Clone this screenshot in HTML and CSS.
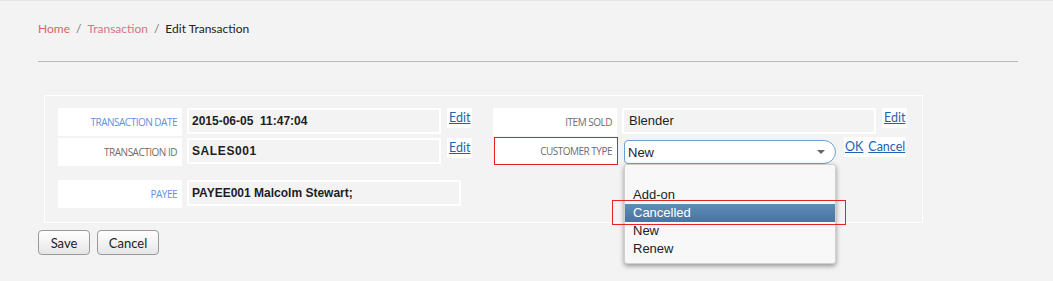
FILE: index.html
```html
<!DOCTYPE html>
<html>
<head>
<meta charset="utf-8">
<link rel="stylesheet" href="styles.css">
</head>
<body>
<div class="page">
  <div class="crumbs">
    <a class="c-home">Home</a><span class="sep">/</span><a class="c-trans">Transaction</a><span class="sep">/</span><span class="c-cur">Edit Transaction</span>
  </div>
  <div class="rule"></div>
  <div class="panel">
    <div class="col col-left">
      <div class="row">
        <div class="label blue">TRANSACTION DATE</div>
        <div class="value bold">2015-06-05&nbsp;&nbsp;11:47:04</div>
        <div class="links"><a>Edit</a></div>
      </div>
      <div class="row r2">
        <div class="label">TRANSACTION ID</div>
        <div class="value bold spaced">SALES001</div>
        <div class="links"><a>Edit</a></div>
      </div>
      <div class="row r3">
        <div class="label blue">PAYEE</div>
        <div class="value bold wide">PAYEE001 Malcolm Stewart;</div>
      </div>
    </div>
    <div class="col col-right">
      <div class="row">
        <div class="label">ITEM SOLD</div>
        <div class="value reg">Blender</div>
        <div class="links"><a>Edit</a></div>
      </div>
      <div class="row r2b">
        <div class="label red">CUSTOMER TYPE</div>
        <div class="select-wrap">
          <div class="select"><span>New</span><span class="arrow"></span></div>
          <ul class="dropdown">
            <li class="empty">&nbsp;</li>
            <li>Add-on</li>
            <li class="sel">Cancelled</li>
            <li>New</li>
            <li>Renew</li>
          </ul>
          <div class="mark"></div>
        </div>
        <div class="links ok"><a>OK</a><a>Cancel</a></div>
      </div>
    </div>
  </div>
  <div class="actions">
    <button class="btn save">Save</button>
    <button class="btn cancel">Cancel</button>
  </div>
</div>
</body>
</html>
```
FILE: styles.css
```css
html, body {
  margin: 0;
  padding: 0;
  background: #f3f3f3;
}
html { height: 100%; }
body {
  min-height: 100%;
  box-sizing: border-box;
  border-top: 1px solid #e6e6e6;
  font-family: Lato, "Open Sans", sans-serif;
}
.page {
  padding: 0 35px 0 38px;
}
.crumbs {
  padding-top: 18px;
  font-size: 12px;
  line-height: 20px;
  color: #222;
}
.crumbs .sep {
  color: #777;
  margin: 0 6px;
}
.c-home { color: #dd6467; }
.c-trans { color: #e07087; }
.rule {
  margin-top: 22px;
  width: 980px;
  border-top: 1px solid #bbbbbb;
}
.panel {
  margin: 33px 0 0 6px;
  width: 879px;
  height: 128px;
  box-sizing: border-box;
  border: 1px solid #ffffff;
  padding: 12px 0 0 13px;
  display: flex;
  position: relative;
  z-index: 1;
}
.col {
  display: flex;
  flex-direction: column;
}
.col-left { width: 435px; }
.row {
  display: flex;
  align-items: flex-start;
  height: 28px;
}
.r2 { margin-top: 2px; }
.r3 { margin-top: 14px; }
.r2b { margin-top: 1px; }
.label {
  width: 124px;
  height: 28px;
  box-sizing: border-box;
  background: #ffffff;
  text-align: right;
  padding: 7px 5px 0 0;
  font-family: "Open Sans", "Noto Sans", sans-serif;
  font-size: 10px;
  line-height: 15px;
  letter-spacing: -0.5px;
  color: #6d6d6d;
}
.label.blue { color: #6390de; }
.label.red {
  border: 1px solid #e02525;
  margin-left: 1px;
  padding-top: 6px;
}
.value {
  margin-left: 5px;
  width: 254px;
  height: 26px;
  box-sizing: border-box;
  border: 2px solid #ffffff;
  padding: 0 0 0 3px;
  font-family: "Liberation Sans", Arial, sans-serif;
  font-size: 12px;
  line-height: 22px;
  color: #1e1e1e;
}
.value.bold { font-weight: bold; }
.value.spaced { letter-spacing: 0.6px; }
.value.wide { width: 274px; }
.value.reg {
  font-size: 13px;
  padding-left: 5px;
}
.links {
  margin-left: 6px;
  height: 20px;
  background: #ffffff;
  padding: 0 2px;
  font-size: 12.5px;
  line-height: 19px;
  display: flex;
  gap: 5px;
}
.links a {
  color: #1c64ad;
  text-decoration: underline;
}
.select-wrap {
  position: relative;
  margin: 3px 0 0 6px;
  width: 212px;
  height: 24px;
}
.select {
  box-sizing: border-box;
  height: 24px;
  border: 1px solid #6d9fd6;
  border-radius: 4px 12px 12px 4px;
  background: #ffffff;
  padding-left: 3px;
  font-family: "Liberation Sans", Arial, sans-serif;
  font-size: 13px;
  line-height: 21px;
  color: #1e1e1e;
  display: flex;
  justify-content: space-between;
  align-items: center;
}
.arrow {
  width: 0;
  height: 0;
  border-left: 4px solid transparent;
  border-right: 4px solid transparent;
  border-top: 4px solid #666;
  margin-right: 10px;
}
.dropdown {
  position: absolute;
  left: 0;
  top: 24px;
  width: 212px;
  box-sizing: border-box;
  margin: 0;
  padding: 3px 0 5px;
  list-style: none;
  background: #f8f8f8;
  border: 1px solid #d0d0d0;
  border-radius: 3px;
  box-shadow: 0 2px 5px rgba(0, 0, 0, 0.4);
  font-family: "Liberation Sans", Arial, sans-serif;
  font-size: 13px;
  color: #222;
  z-index: 2;
}
.dropdown li {
  height: 18px;
  line-height: 18px;
  padding-left: 8px;
}
.dropdown li.sel {
  color: #ffffff;
  background: linear-gradient(#5c8dba, #4a73a0);
}
.mark {
  position: absolute;
  left: -12px;
  top: 60px;
  width: 234px;
  height: 25px;
  box-sizing: border-box;
  border: 1px solid #e02525;
  z-index: 3;
}
.ok { margin-left: 8px; padding: 0 1px; }
.actions {
  margin-top: 7px;
  display: flex;
  gap: 7px;
}
.btn {
  height: 25px;
  box-sizing: border-box;
  border: 1px solid #9a9a9a;
  border-radius: 4px;
  background: linear-gradient(#ffffff, #e6e6e6);
  font-family: Lato, "Open Sans", sans-serif;
  font-size: 13px;
  color: #222;
  padding: 0;
}
.save { width: 52px; }
.cancel { width: 62px; }
```
